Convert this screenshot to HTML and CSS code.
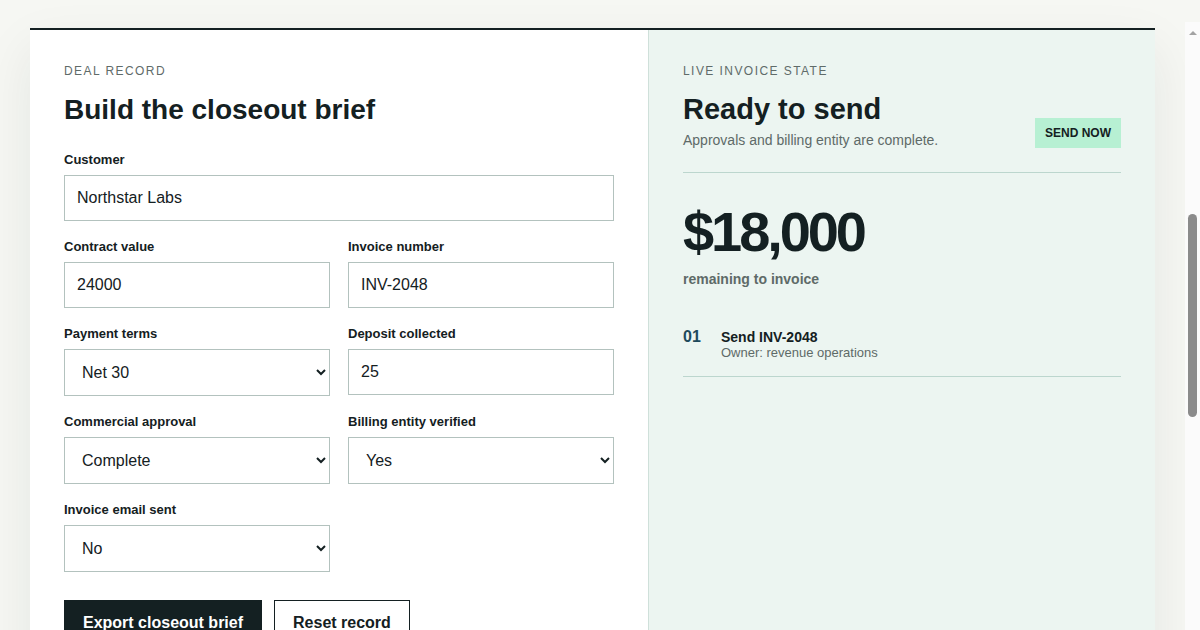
FILE: index.html
```html
<!DOCTYPE html>
<html lang="en">
<head>
<meta charset="utf-8">
<title>Closeout brief</title>
<link rel="stylesheet" href="styles.css">
</head>
<body>
<main class="card">
  <section class="panel form-panel">
    <p class="eyebrow">Deal record</p>
    <h1 class="title">Build the closeout brief</h1>
    <div class="fields">
      <label class="field wide">
        <span class="label">Customer</span>
        <input class="control" type="text" value="Northstar Labs">
      </label>
      <label class="field">
        <span class="label">Contract value</span>
        <input class="control" type="text" value="24000">
      </label>
      <label class="field">
        <span class="label">Invoice number</span>
        <input class="control" type="text" value="INV-2048">
      </label>
      <label class="field">
        <span class="label">Payment terms</span>
        <select class="control select">
          <option>Net 15</option>
          <option selected>Net 30</option>
          <option>Net 45</option>
        </select>
      </label>
      <label class="field">
        <span class="label">Deposit collected</span>
        <input class="control" type="text" value="25">
      </label>
      <label class="field">
        <span class="label">Commercial approval</span>
        <select class="control select">
          <option>Pending</option>
          <option selected>Complete</option>
        </select>
      </label>
      <label class="field">
        <span class="label">Billing entity verified</span>
        <select class="control select">
          <option selected>Yes</option>
          <option>No</option>
        </select>
      </label>
      <label class="field">
        <span class="label">Invoice email sent</span>
        <select class="control select">
          <option>Yes</option>
          <option selected>No</option>
        </select>
      </label>
    </div>
    <div class="actions">
      <button class="btn btn-primary" type="button">Export closeout brief</button>
      <button class="btn btn-secondary" type="button">Reset record</button>
    </div>
  </section>
  <aside class="panel state-panel">
    <p class="eyebrow">Live invoice state</p>
    <div class="state-head">
      <div>
        <h2 class="title">Ready to send</h2>
        <p class="subtitle">Approvals and billing entity are complete.</p>
      </div>
      <span class="badge">SEND NOW</span>
    </div>
    <div class="amount">$18,000</div>
    <p class="amount-note">remaining to invoice</p>
    <ol class="steps">
      <li class="step">
        <span class="step-num">01</span>
        <div class="step-body">
          <div class="step-title">Send INV-2048</div>
          <div class="step-owner">Owner: revenue operations</div>
        </div>
      </li>
    </ol>
  </aside>
</main>
<div class="scrollbar" aria-hidden="true">
  <span class="scroll-arrow"></span>
  <span class="scroll-thumb"></span>
</div>
</body>
</html>
```
FILE: styles.css
```css
* { box-sizing: border-box; }

html, body {
  margin: 0;
}

body {
  background: #f6f7f3;
  color: #142022;
  font-family: "Liberation Sans", Arial, sans-serif;
  padding: 28px 45px 40px 30px;
}

.card {
  display: grid;
  grid-template-columns: 618px 1fr;
  background: #ffffff;
  border-top: 2px solid #142022;
  box-shadow: 0 20px 50px rgba(20, 32, 34, 0.08);
}

.panel {
  padding: 34px;
}

.state-panel {
  background: #ecf5f1;
  border-left: 1px solid #cfe0da;
}

.eyebrow {
  margin: 0 0 16px;
  font-size: 12px;
  line-height: 14px;
  letter-spacing: 0.12em;
  text-transform: uppercase;
  color: #5f6b69;
}

.title {
  margin: 0;
  font-size: 28px;
  line-height: 1.15;
  font-weight: 700;
  color: #142022;
}

.form-panel .title {
  margin-top: 2px;
  margin-bottom: 26px;
}

.fields {
  display: grid;
  grid-template-columns: 1fr 1fr;
  gap: 18px;
}

.field {
  display: flex;
  flex-direction: column;
  gap: 8px;
}

.field.wide {
  grid-column: 1 / -1;
}

.label {
  font-size: 13px;
  font-weight: 700;
  color: #142022;
}

.control {
  width: 100%;
  font-family: "Liberation Sans", Arial, sans-serif;
  font-size: 16px;
  color: #142022;
  background: #ffffff;
  border: 1px solid #b3c2be;
  border-radius: 0;
  padding: 13px 12px;
  margin: 0;
}

.select {
  height: 47px;
  padding: 0 12px 0 13px;
}

.actions {
  display: flex;
  gap: 12px;
  margin-top: 28px;
}

.btn {
  font-family: "Liberation Sans", Arial, sans-serif;
  font-size: 16px;
  font-weight: 700;
  padding: 13px 18px 12px;
  border: 1px solid #142022;
  border-radius: 0;
  cursor: pointer;
}

.btn-primary {
  background: #142022;
  color: #ffffff;
}

.btn-secondary {
  background: #ffffff;
  color: #142022;
}

.state-head {
  display: flex;
  justify-content: space-between;
  align-items: flex-end;
  padding-bottom: 24px;
  border-bottom: 1px solid #bcd6ce;
}

.state-head .title {
  font-size: 29px;
  line-height: 30px;
  margin-bottom: 8px;
}

.subtitle {
  margin: 0;
  font-size: 14px;
  color: #5e6a68;
}

.badge {
  background: #b7f0d3;
  color: #142022;
  font-size: 12px;
  font-weight: 700;
  padding: 8px 10px;
}

.amount {
  margin-top: 31px;
  font-size: 56px;
  line-height: 1;
  font-weight: 700;
  letter-spacing: -0.055em;
  color: #142022;
}

.amount-note {
  margin: 11px 0 0;
  font-size: 14px;
  font-weight: 700;
  color: #5e6a68;
}

.steps {
  list-style: none;
  margin: 26px 0 0;
  padding: 0;
}

.step {
  display: flex;
  align-items: baseline;
  padding: 15px 0 16px;
  border-bottom: 1px solid #bcd6ce;
}

.step-num {
  width: 38px;
  flex: none;
  font-size: 16px;
  font-weight: 700;
  color: #1e4a5c;
}

.step-title {
  font-size: 14px;
  font-weight: 700;
  color: #142022;
}

.step-owner {
  font-size: 13px;
  color: #5e6a68;
}

.scrollbar {
  position: fixed;
  top: 22px;
  right: 0;
  bottom: 0;
  width: 15px;
  background: #fbfbfb;
}

.scroll-arrow {
  position: absolute;
  top: 9px;
  left: 4px;
  width: 0;
  height: 0;
  border-left: 4px solid transparent;
  border-right: 4px solid transparent;
  border-bottom: 4px solid #a3a3a3;
}

.scroll-thumb {
  position: absolute;
  top: 192px;
  left: 3px;
  width: 9px;
  height: 203px;
  border-radius: 5px;
  background: #8b8b8b;
}
```
